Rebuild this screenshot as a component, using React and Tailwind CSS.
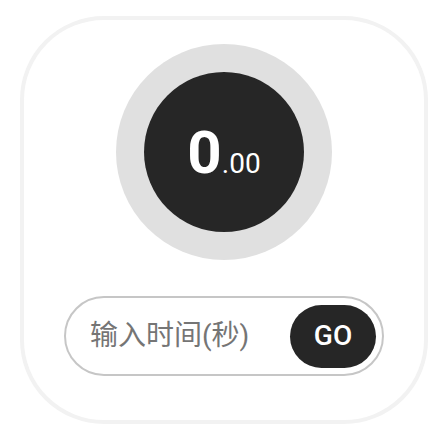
import React, { useState } from "react";

const FONT = { fontFamily: 'Roboto, "Noto Sans CJK SC", sans-serif' };

const Timer = () => {
  const [value, setValue] = useState("");

  return (
    <div className="min-h-screen bg-white" style={FONT}>
      <div className="pl-[20px] pt-[16px]">
        <div className="w-[408px] h-[408px] rounded-[84px] border-4 border-[#f2f2f2] bg-white flex flex-col items-center pt-[24px]">
          {/* dial */}
          <div className="w-[216px] h-[216px] rounded-full bg-[#e0e0e0] flex items-center justify-center">
            <div className="w-[160px] h-[160px] rounded-full bg-[#262626] flex items-center justify-center text-white">
              <div className="flex items-baseline mt-[2px]">
                <span className="text-[60px] font-bold leading-none">0</span>
                <span className="text-[28px] leading-none">.00</span>
              </div>
            </div>
          </div>

          {/* input */}
          <div className="mt-[36px] w-[320px] h-[80px] rounded-full border-2 border-[#c6c6c6] flex items-center pl-[24px] pr-[6px]">
            <input
              value={value}
              onChange={(e) => setValue(e.target.value)}
              placeholder="输入时间(秒)"
              className="flex-1 min-w-0 bg-transparent outline-none text-[28px] text-[#333] placeholder:text-[#757575]"
              style={FONT}
            />
            <button className="w-[86px] h-[63px] rounded-full bg-[#262626] text-white text-[28px] font-medium">
              GO
            </button>
          </div>
        </div>
      </div>
    </div>
  );
};

export default Timer;
